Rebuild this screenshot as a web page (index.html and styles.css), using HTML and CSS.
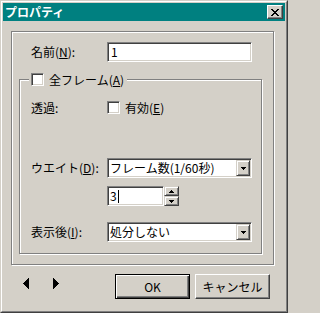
FILE: index.html
```html
<!DOCTYPE html>
<html lang="ja">
<head>
<meta charset="utf-8">
<title>プロパティ</title>
<link rel="stylesheet" href="styles.css">
</head>
<body>
<div class="window">
  <div class="frame">
    <div class="titlebar">
      <span class="title">プロパティ</span>
      <div class="close-btn">
        <svg width="8" height="7" viewBox="0 0 8 7" shape-rendering="crispEdges"><path d="M0 0h2v1H0zM6 0h2v1H6zM1 1h2v1H1zM5 1h2v1H5zM2 2h4v1H2zM3 3h2v1H3zM2 4h4v1H2zM1 5h2v1H1zM5 5h2v1H5zM0 6h2v1H0zM6 6h2v1H6z" fill="#000"/></svg>
      </div>
    </div>
    <div class="content">
      <div class="etched outer">
        <div class="row name-row">
          <span class="lbl">名前(<u>N</u>):</span>
          <div class="sunken edit">1</div>
        </div>
        <div class="etched group">
          <div class="legend">
            <span class="sunken check"></span>
            <span class="txt">全フレーム(<u>A</u>)</span>
          </div>
          <div class="row r-trans">
            <span class="lbl">透過:</span>
            <span class="sunken check"></span>
            <span class="txt check-label">有効(<u>E</u>)</span>
          </div>
          <div class="row r-wait">
            <span class="lbl">ウエイト(<u>D</u>):</span>
            <div class="sunken combo">
              <span class="combo-text">フレーム数(1/60秒)</span>
              <span class="raised drop-btn"><svg width="5" height="3" viewBox="0 0 5 3" shape-rendering="crispEdges"><path d="M0 0h5v1H0zM1 1h3v1H1zM2 2h1v1H2z" fill="#000"/></svg></span>
            </div>
          </div>
          <div class="row r-spin">
            <span class="lbl"></span>
            <div class="sunken spin-edit">3<span class="caret"></span></div>
            <div class="spin">
              <span class="raised spin-btn"><svg width="5" height="3" viewBox="0 0 5 3" shape-rendering="crispEdges"><path d="M2 0h1v1H2zM1 1h3v1H1zM0 2h5v1H0z" fill="#000"/></svg></span>
              <span class="raised spin-btn"><svg width="5" height="3" viewBox="0 0 5 3" shape-rendering="crispEdges"><path d="M0 0h5v1H0zM1 1h3v1H1zM2 2h1v1H2z" fill="#000"/></svg></span>
            </div>
          </div>
          <div class="row r-after">
            <span class="lbl">表示後(<u>I</u>):</span>
            <div class="sunken combo">
              <span class="combo-text">処分しない</span>
              <span class="raised drop-btn"><svg width="5" height="3" viewBox="0 0 5 3" shape-rendering="crispEdges"><path d="M0 0h5v1H0zM1 1h3v1H1zM2 2h1v1H2z" fill="#000"/></svg></span>
            </div>
          </div>
        </div>
      </div>
      <div class="bottom">
        <div class="arrows">
          <svg width="6" height="11" viewBox="0 0 6 11" shape-rendering="crispEdges"><path d="M5 0h1v11H5zM4 1h1v9H4zM3 2h1v7H3zM2 3h1v5H2zM1 4h1v3H1zM0 5h1v1H0z" fill="#000"/></svg>
          <svg width="6" height="11" viewBox="0 0 6 11" shape-rendering="crispEdges"><path d="M0 0h1v11H0zM1 1h1v9H1zM2 2h1v7H2zM3 3h1v5H3zM4 4h1v3H4zM5 5h1v1H5z" fill="#000"/></svg>
        </div>
        <div class="btns">
          <div class="btn default">OK</div>
          <div class="btn">キャンセル</div>
        </div>
      </div>
    </div>
  </div>
</div>
</body>
</html>
```
FILE: styles.css
```css
body {
  margin: 0;
  background: #d4d0c8;
  font-family: "Noto Sans CJK JP", "Noto Sans", sans-serif;
  font-size: 12px;
  line-height: 14px;
  color: #000;
}

.window {
  width: 288px;
  height: 313px;
  box-sizing: border-box;
  border: 1px solid;
  border-color: #d4d0c8 #404040 #404040 #d4d0c8;
  background: #d4d0c8;
}

.frame {
  height: 100%;
  box-sizing: border-box;
  border: 1px solid;
  border-color: #fff #808080 #808080 #fff;
  padding: 1px;
  display: flex;
  flex-direction: column;
}

.titlebar {
  flex: none;
  height: 18px;
  background: #008080;
  display: flex;
  align-items: center;
  justify-content: space-between;
  padding: 0 2px;
}

.title {
  color: #fff;
  font-weight: bold;
  font-size: 12px;
  line-height: 14px;
}

.close-btn {
  width: 16px;
  height: 14px;
  box-sizing: border-box;
  background: #d4d0c8;
  border: 1px solid;
  border-color: #fff #404040 #404040 #fff;
  box-shadow: inset -1px -1px #808080;
  display: flex;
  align-items: center;
  justify-content: center;
}

.close-btn svg {
  display: block;
  margin-left: -1px;
}

.content {
  flex: 1;
  padding: 10px 10px 0 8px;
  display: flex;
  flex-direction: column;
}

.etched {
  box-sizing: border-box;
  border: 1px solid #808080;
  box-shadow: inset 1px 1px #fff, 1px 1px #fff;
}

.outer {
  width: 263px;
  height: 234px;
  padding: 10px 11px 0 7px;
}

.row {
  display: flex;
  align-items: center;
}

.lbl {
  flex: none;
  width: 76px;
  white-space: nowrap;
}

.name-row {
  height: 20px;
  padding-left: 12px;
}

.sunken {
  box-sizing: border-box;
  border: 1px solid;
  border-color: #808080 #fff #fff #808080;
  box-shadow: inset 1px 1px #404040, inset -1px -1px #d4d0c8;
  background: #fff;
}

.raised {
  box-sizing: border-box;
  background: #d4d0c8;
  border: 1px solid;
  border-color: #d4d0c8 #404040 #404040 #d4d0c8;
  box-shadow: inset 1px 1px #fff, inset -1px -1px #808080;
  display: flex;
  align-items: center;
  justify-content: center;
}

.edit {
  width: 145px;
  height: 20px;
  padding: 0 3px;
  display: flex;
  align-items: center;
}

.group {
  position: relative;
  width: 243px;
  height: 175px;
  margin-top: 17px;
  padding: 21px 0 0 11px;
}

.legend {
  position: absolute;
  left: 9px;
  top: -7px;
  height: 13px;
  padding: 0 3px 0 2px;
  background: #d4d0c8;
  display: flex;
  align-items: center;
  gap: 5px;
}

.check {
  flex: none;
  width: 13px;
  height: 13px;
}

.txt {
  white-space: nowrap;
}

.check-label {
  margin-left: 5px;
}

.r-trans {
  height: 13px;
}

.r-wait {
  height: 20px;
  margin-top: 44px;
}

.r-spin {
  height: 20px;
  margin-top: 8px;
}

.r-after {
  height: 20px;
  margin-top: 16px;
}

.combo {
  width: 145px;
  height: 20px;
  display: flex;
  align-items: center;
  padding: 1px 1px 1px 2px;
}

.combo-text {
  flex: 1;
  white-space: nowrap;
}

.drop-btn {
  flex: none;
  width: 14px;
  height: 16px;
}

.drop-btn svg,
.spin-btn svg {
  display: block;
}

.spin-edit {
  width: 57px;
  height: 20px;
  padding: 0 2px;
  display: flex;
  align-items: center;
}

.caret {
  display: inline-block;
  width: 1px;
  height: 13px;
  background: #000;
  margin-left: 1px;
}

.spin {
  flex: none;
  display: flex;
  flex-direction: column;
  width: 15px;
  height: 20px;
}

.spin-btn {
  width: 15px;
  height: 10px;
}

.bottom {
  display: flex;
  align-items: flex-start;
  margin-top: 9px;
}

.arrows {
  display: flex;
  gap: 24px;
  margin: 4px 0 0 12px;
}

.arrows svg {
  display: block;
}

.btns {
  margin-left: auto;
  margin-right: 5px;
  display: flex;
  gap: 5px;
}

.btn {
  width: 75px;
  height: 25px;
  box-sizing: border-box;
  display: flex;
  align-items: center;
  justify-content: center;
  background: #d4d0c8;
  border: 1px solid;
  border-color: #fff #404040 #404040 #fff;
  box-shadow: inset -1px -1px #808080;
}

.btn.default {
  border-color: #000;
  box-shadow: inset 1px 1px #fff, inset -1px -1px #404040, inset -2px -2px #808080;
}
```
